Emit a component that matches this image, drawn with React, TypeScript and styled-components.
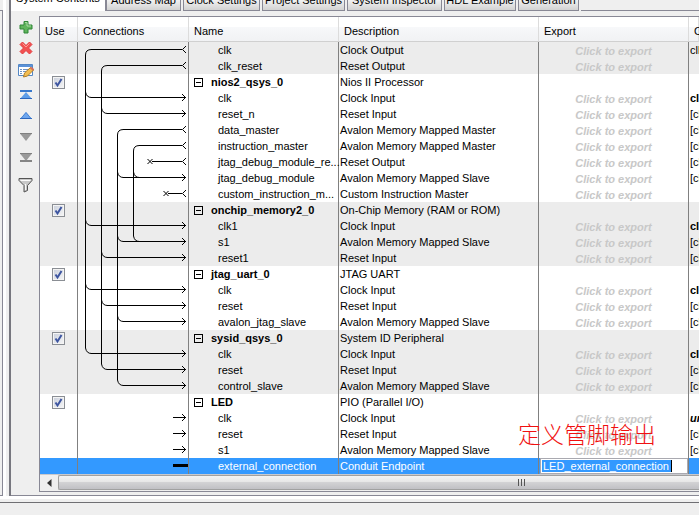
import React from 'react';
import styled, { createGlobalStyle } from 'styled-components';

const GlobalStyle = createGlobalStyle`
  html, body { margin: 0; height: 100%; overflow: hidden; background: #efefef; }
  body, button, input, table { font-family: "Liberation Sans", Arial, sans-serif; font-size: 11px; color: #000; }
  #root { height: 100%; }
  * { box-sizing: border-box; }
`;

const LINE = '#888895';

const Screen = styled.div`
  display: flex;
  flex-direction: column;
  height: 100vh;
  overflow: hidden;
`;

const Workspace = styled.div`
  display: flex;
  flex: none;
`;

const SidePane = styled.div`
  flex: none;
  width: 3px;
  margin-top: 10px;
  background: #efefef;
  border: solid ${LINE};
  border-width: 1px 1px 1px 0;
`;

const Divider = styled.div`
  flex: none;
  width: 6px;
  background: #efefef;
  border-left: 3px solid #fff;
`;

const MainPane = styled.main`
  flex: 1;
  min-width: 0;
  border-left: 2px solid #77777f;
`;

const TabBar = styled.nav`
  display: flex;
  align-items: flex-end;
  height: 11px;
  overflow: hidden;
`;

const TabButton = styled.button<{ $active?: boolean; $width: number }>`
  flex: none;
  width: ${p => p.$width}px;
  height: ${p => (p.$active ? 24 : 22)}px;
  padding: ${p => (p.$active ? '0 0 4px' : '0')};
  border: solid ${LINE};
  border-width: ${p => (p.$active ? '1px 1px 0 0' : '1px')};
  margin-right: ${p => (p.$active ? 0 : 2)}px;
  background: ${p => (p.$active ? '#fff' : 'linear-gradient(#f2f2f2 50%, #d2d2d2)')};
  white-space: nowrap;
`;

const TabRest = styled.div`
  flex: 1;
  align-self: stretch;
  border-bottom: 1px solid ${LINE};
`;

const PanelBody = styled.div`
  display: flex;
  padding: 5px 0 3px 1px;
  border-bottom: 1px solid ${LINE};
  background: #efefef;
`;

const Toolbar = styled.div`
  flex: none;
  width: 27px;
  display: flex;
  flex-direction: column;
  align-items: center;
  padding-top: 1px;
`;

const ToolButton = styled.button<{ $height: number }>`
  display: flex;
  align-items: center;
  justify-content: center;
  width: 20px;
  height: ${p => p.$height}px;
  padding: 0;
  border: 0;
  background: none;
`;

const TableFrame = styled.div`
  flex: 1;
  min-width: 0;
  overflow: hidden;
  border: solid ${LINE};
  border-width: 1px 0 1px 1px;
  background: #fff;
`;

const Grid = styled.table`
  width: 100%;
  table-layout: fixed;
  border-collapse: separate;
  border-spacing: 0;
`;

const HeadCell = styled.th<{ $indent: number }>`
  height: 25px;
  padding: 3px 0 0 ${p => p.$indent}px;
  text-align: left;
  font-weight: normal;
  font-size: 11px;
  white-space: nowrap;
  border-right: 1px solid #dcdcdc;
  border-bottom: 1px solid #d0d0d0;
  background: linear-gradient(#fff 0, #fff 40%, #f7f8fa 41%, #f1f2f4);
`;

const Row = styled.tr<{ $tone: 'plain' | 'shade' | 'selected' }>`
  background: ${p => ({ plain: '#fff', shade: '#ececec', selected: '#3399ff' })[p.$tone]};
  color: ${p => (p.$tone === 'selected' ? '#fff' : '#000')};
`;

const Cell = styled.td`
  height: 16px;
  padding: 0 0 0 1px;
  line-height: 16px;
  vertical-align: top;
  overflow: hidden;
  white-space: nowrap;
  border-right: 1px solid #808080;
`;

const UseCell = styled(Cell)`
  padding: 2px 0 0 12px;
  line-height: 0;
`;

const WireCell = styled(Cell)`
  padding: 0;
  line-height: 0;
`;

const NameCell = styled(Cell)<{ $group?: boolean }>`
  padding: 0 0 0 ${p => (p.$group ? 5 : 29)}px;
  overflow: visible;
  font-weight: ${p => (p.$group ? 'bold' : 'normal')};
`;

const GroupName = styled.span`
  display: flex;
  align-items: center;
  gap: 8px;
  height: 16px;
`;

const Toggle = styled.button`
  display: block;
  padding: 0;
  border: 0;
  background: none;
  line-height: 0;
`;

const ExportCell = styled(Cell)`
  padding: 2px 0 0;
`;

const ExportButton = styled.button`
  display: block;
  width: 100%;
  height: 14px;
  padding: 0;
  border: 0;
  background: none;
  color: #c8c8c8;
  line-height: 14px;
  font-weight: bold;
  font-style: italic;
`;

const ExportEditor = styled.div`
  display: flex;
  height: 16px;
  padding: 1px 1px 0;
  border: 1px solid #a9a9b0;
  background: #fff;
  margin-left: 1px;
`;

const ExportInput = styled.input`
  flex: none;
  width: 130px;
  height: 12px;
  padding: 0 0 0 1px;
  border: 0;
  border-right: 1px solid #000;
  outline: 0;
  background: #3399ff;
  color: #fff;
  line-height: 12px;
`;

const ClockCell = styled(Cell)<{ $strong?: boolean; $italic?: boolean }>`
  border-right: 0;
  font-weight: ${p => (p.$strong ? 'bold' : 'normal')};
  font-style: ${p => (p.$italic ? 'italic' : 'normal')};
`;

const CheckLabel = styled.label`
  display: inline-grid;
  width: 13px;
  height: 13px;
  > * { grid-area: 1 / 1; }
  svg { pointer-events: none; }
`;

const CheckInput = styled.input`
  appearance: none;
  width: 13px;
  height: 13px;
  margin: 0;
  border: 1px solid #8a8e94;
  background: linear-gradient(135deg, #c8cedb, #f7f7f7);
  box-shadow: inset 0 0 0 1px #f4f4f4;
`;

const ScrollBar = styled.div`
  display: flex;
  height: 17px;
  border-top: 1px solid #c9c9cd;
  background: #efefef;
`;

const ScrollArrow = styled.button`
  flex: none;
  display: flex;
  align-items: center;
  justify-content: center;
  width: 18px;
  padding: 0;
  border: 0;
  background: none;
`;

const ScrollThumb = styled.button`
  flex: 1;
  display: flex;
  align-items: center;
  justify-content: center;
  height: 15px;
  padding: 0 0 0 286px;
  border: 1px solid #a0a0a0;
  border-right: 0;
  border-radius: 2px 0 0 2px;
  background: linear-gradient(#f4f4f4, #e6e6e6 45%, #d2d2d4 50%, #c0c0c4);
`;

const Annotation = styled.div`
  position: absolute;
  left: 518px;
  top: 417px;
  color: #f01010;
  font-family: "Noto Sans CJK SC", sans-serif;
  font-weight: 300;
  font-size: 23px;
  line-height: 32px;
  pointer-events: none;
`;

const StatusGap = styled.div`
  flex: none;
  height: 6px;
  border-top: 3px solid #fff;
`;

const Footer = styled.footer`
  flex: 1;
  border-top: 1px solid #6f6f73;
`;

type Port = 'in' | 'out' | 'open' | 'loose' | 'bar';
type Item = { name: string; desc: string; port?: Port; clock?: string; group?: boolean; editing?: boolean; from?: number };

const clk = (name: string, desc = 'Clock Input'): Item => ({ name, desc, port: 'in', clock: 'clk' });
const inp = (name: string, desc: string): Item => ({ name, desc, port: 'in', clock: '[clk]' });
const head = (name: string, desc: string): Item => ({ name, desc, group: true });
const SLAVE = 'Avalon Memory Mapped Slave';
const MASTER = 'Avalon Memory Mapped Master';

const groups: Item[][] = [
  [
    { name: 'clk', desc: 'Clock Output', port: 'out', clock: 'clk_0' },
    { name: 'clk_reset', desc: 'Reset Output', port: 'out' },
  ],
  [
    head('nios2_qsys_0', 'Nios II Processor'),
    clk('clk'),
    inp('reset_n', 'Reset Input'),
    { name: 'data_master', desc: MASTER, port: 'out', clock: '[clk]' },
    { name: 'instruction_master', desc: MASTER, port: 'out', clock: '[clk]' },
    { name: 'jtag_debug_module_re...', desc: 'Reset Output', port: 'open', from: 71, clock: '[clk]' },
    inp('jtag_debug_module', SLAVE),
    { name: 'custom_instruction_m...', desc: 'Custom Instruction Master', port: 'open', from: 87 },
  ],
  [head('onchip_memory2_0', 'On-Chip Memory (RAM or ROM)'), clk('clk1'), inp('s1', SLAVE), inp('reset1', 'Reset Input')],
  [head('jtag_uart_0', 'JTAG UART'), clk('clk'), inp('reset', 'Reset Input'), inp('avalon_jtag_slave', SLAVE)],
  [head('sysid_qsys_0', 'System ID Peripheral'), clk('clk'), inp('reset', 'Reset Input'), inp('control_slave', SLAVE)],
  [
    head('LED', 'PIO (Parallel I/O)'),
    { name: 'clk', desc: 'Clock Input', port: 'loose', clock: 'unconnected' },
    { name: 'reset', desc: 'Reset Input', port: 'loose', clock: '[clk]' },
    { name: 's1', desc: SLAVE, port: 'loose', clock: '[clk]' },
    { name: 'external_connection', desc: 'Conduit Endpoint', port: 'bar', editing: true },
  ],
];

const nets = [
  { x: 7, rows: [0, 3, 11, 15, 19] },
  { x: 23, rows: [1, 4, 13, 16, 20] },
  { x: 39, rows: [5, 8, 12, 17, 21] },
  { x: 55, rows: [6, 8, 12] },
];

function Wires({ row, item }: { row: number; item: Item }) {
  const paths: string[] = [];
  let start = item.port === 'loose' || item.port === 'bar' ? 95 : item.from ?? 110;
  for (const net of nets) {
    const first = net.rows[0];
    const last = net.rows[net.rows.length - 1];
    const x = net.x + 0.5;
    if (row === first) paths.push(`M${x} 16V13Q${x} 7.5 ${x + 6} 7.5`);
    else if (row > first && row < last) paths.push(`M${x} 0V16`);
    if (row > first && net.rows.includes(row)) paths.push(`M${x} 0V2Q${x + 1} 7.5 ${x + 6} 7.5`);
    if (net.rows.includes(row)) start = Math.min(start, net.x + 6);
  }
  const p = item.port;
  if (p && p !== 'bar') paths.push(`M${p === 'open' ? start + 3 : start} 7.5H${p === 'out' || p === 'open' ? 104 : 108}`);
  return (
    <svg width="110" height="16" fill="none" stroke="#000" aria-hidden="true">
      {paths.map(d => <path key={d} d={d} />)}
      {(p === 'in' || p === 'loose') && <path d="M104 4L107.500 7.500L104 11" />}
      {(p === 'out' || p === 'open') && <path d="M108 4L104.500 7.500L108 11" />}
      {p === 'open' && <path d={`M${start - 1.5} 5l5 5M${start + 3.5} 5l-5 5`} />}
      {p === 'bar' && <path d="M95 7.500H110" strokeWidth="3" />}
    </svg>
  );
}

const ToggleIcon = () => (
  <svg width="9" height="9" fill="none" stroke="#000" shapeRendering="crispEdges">
    <path d="M.5 .5h8v8h-8zM2 4.500h5" />
  </svg>
);

const PlusIcon = () => (
  <svg width="14" height="14">
    <path d="M5 1.500h4V5h4v4H9v4H5V9H1V5h4z" fill="#60b45c" stroke="#2f8636" />
    <path d="M6 2.500h2V6h4" fill="none" stroke="#a9dba2" />
  </svg>
);

const CrossIcon = () => (
  <svg width="14" height="14">
    <path d="M3.500 1L7 4.500 10.500 1 13 3.500 9.500 7 13 10.500 10.500 13 7 9.500 3.500 13 1 10.500 4.500 7 1 3.500z" fill="#f25050" stroke="#e23b3f" />
    <path d="M3.500 2.500L7 6l3.500-3.500" fill="none" stroke="#ff9a94" />
  </svg>
);

const EditIcon = () => (
  <svg width="16" height="15">
    <path d="M.5 1.500h14v11H.5z" fill="#fff" stroke="#5487c4" />
    <path d="M1 2h13v2H1z" fill="#5b92d8" />
    <path d="M2 6.500h2M5 6.500h6M2 8.500h2M5 8.500h3M2 10.500h2" stroke="#6f93c4" />
    <path d="M5.500 14l1-4 6-5.500 3 2.500-6 6z" fill="#f2bd51" stroke="#b07e25" />
    <path d="M12.500 4.500l3 2.500" stroke="#d6705c" strokeWidth="2" />
  </svg>
);

const TopIcon = () => (
  <svg width="14" height="12">
    <path d="M1 2h12" stroke="#3878cc" strokeWidth="2" />
    <path d="M7 3l6 7H1z" fill="#5e9de8" />
    <path d="M1 9.500h12" stroke="#2b66bd" />
  </svg>
);

const UpIcon = () => (
  <svg width="14" height="10">
    <path d="M7 1l6 7H1z" fill="#6ea6ee" />
    <path d="M1 7.500h12" stroke="#2b66bd" />
    <path d="M7 1.500l5 6M7 1.500l-5 6" stroke="#4a86d6" />
  </svg>
);

const DownIcon = () => (
  <svg width="14" height="10">
    <path d="M1 1.500h12L7 9z" fill="#9a9a9a" />
    <path d="M1 1.500h12" stroke="#808080" />
  </svg>
);

const BottomIcon = () => (
  <svg width="14" height="12">
    <path d="M1 1.500h12L7 9z" fill="#9a9a9a" />
    <path d="M1 1.500h12" stroke="#808080" />
    <path d="M1 9h12" stroke="#858585" strokeWidth="2" />
  </svg>
);

const FilterIcon = () => (
  <svg width="15" height="16">
    <path d="M1 1.500h13v2L9.500 8.500v5L6 15V8.500L1 3.500z" fill="#c8c8c8" stroke="#555" />
    <path d="M2.500 3.500h10M7.500 7v6" stroke="#fafafa" />
  </svg>
);

const tools = [
  { label: 'Add', height: 20, icon: <PlusIcon /> },
  { label: 'Remove', height: 22, icon: <CrossIcon /> },
  { label: 'Edit', height: 22, icon: <EditIcon /> },
  { label: 'Move to top', height: 28, icon: <TopIcon /> },
  { label: 'Move up', height: 14, icon: <UpIcon /> },
  { label: 'Move down', height: 28, icon: <DownIcon /> },
  { label: 'Move to bottom', height: 14, icon: <BottomIcon /> },
  { label: 'Filter', height: 40, icon: <FilterIcon /> },
];

const tabs = [
  { label: 'Address Map', width: 75 },
  { label: 'Clock Settings', width: 77 },
  { label: 'Project Settings', width: 83 },
  { label: 'System Inspector', width: 95 },
  { label: 'HDL Example', width: 72 },
  { label: 'Generation', width: 61 },
];

const columns = [
  { label: 'Use', width: 38, indent: 5 },
  { label: 'Connections', width: 111, indent: 5 },
  { label: 'Name', width: 150, indent: 5 },
  { label: 'Description', width: 200, indent: 5 },
  { label: 'Export', width: 150, indent: 5 },
  { label: 'Clock', width: undefined, indent: 5 },
];

function ItemRow({ item, row, shaded }: { item: Item; row: number; shaded: boolean }) {
  return (
    <Row $tone={item.editing ? 'selected' : shaded ? 'shade' : 'plain'}>
      <UseCell>
        {item.group && (
          <CheckLabel>
            <CheckInput type="checkbox" defaultChecked aria-label={`Use ${item.name}`} />
            <svg width="13" height="13" fill="none" stroke="#3d55a0" strokeWidth="2">
              <path d="M3.500 6.500L5.500 9.500L9.500 3" />
            </svg>
          </CheckLabel>
        )}
      </UseCell>
      <WireCell><Wires row={row} item={item} /></WireCell>
      <NameCell $group={item.group}>
        {item.group ? (
          <GroupName>
            <Toggle aria-label={`Collapse ${item.name}`}><ToggleIcon /></Toggle>
            {item.name}
          </GroupName>
        ) : item.name}
      </NameCell>
      <Cell>{item.desc}</Cell>
      {item.editing ? (
        <WireCell>
          <ExportEditor><ExportInput aria-label="Export name" defaultValue="LED_external_connection" /></ExportEditor>
        </WireCell>
      ) : (
        <ExportCell>{!item.group && <ExportButton>Click to export</ExportButton>}</ExportCell>
      )}
      <ClockCell $strong={item.clock === 'clk' || item.clock === 'unconnected'} $italic={item.clock === 'unconnected'}>
        {item.clock}
      </ClockCell>
    </Row>
  );
}

export default function App() {
  let row = 0;
  return (
    <Screen>
      <GlobalStyle />
      <Workspace>
        <SidePane />
        <Divider />
        <MainPane>
          <TabBar>
            <TabButton $active $width={95}>System Contents</TabButton>
            {tabs.map(t => <TabButton key={t.label} $width={t.width}>{t.label}</TabButton>)}
            <TabRest />
          </TabBar>
          <PanelBody>
            <Toolbar>
              {tools.map(t => (
                <ToolButton key={t.label} aria-label={t.label} $height={t.height}>{t.icon}</ToolButton>
              ))}
            </Toolbar>
            <TableFrame>
              <Grid>
                <colgroup>{columns.map(c => <col key={c.label} width={c.width} />)}</colgroup>
                <thead>
                  <tr>{columns.map(c => <HeadCell key={c.label} $indent={c.indent}>{c.label}</HeadCell>)}</tr>
                </thead>
                <tbody>
                  {groups.map((g, gi) => g.map(item => (
                    <ItemRow key={`${gi}-${item.name}`} item={item} row={row++} shaded={gi % 2 === 0} />
                  )))}
                </tbody>
              </Grid>
              <ScrollBar>
                <ScrollArrow aria-label="Scroll left">
                  <svg width="5" height="8"><path d="M4.500 0v8L0 4z" fill="#333" /></svg>
                </ScrollArrow>
                <ScrollThumb aria-label="Horizontal scroll">
                  <svg width="9" height="7" stroke="#555"><path d="M.5 0v7M3.500 0v7M6.500 0v7" /></svg>
                </ScrollThumb>
              </ScrollBar>
            </TableFrame>
          </PanelBody>
        </MainPane>
      </Workspace>
      <StatusGap />
      <Footer />
      <Annotation>定义管脚输出</Annotation>
    </Screen>
  );
}
